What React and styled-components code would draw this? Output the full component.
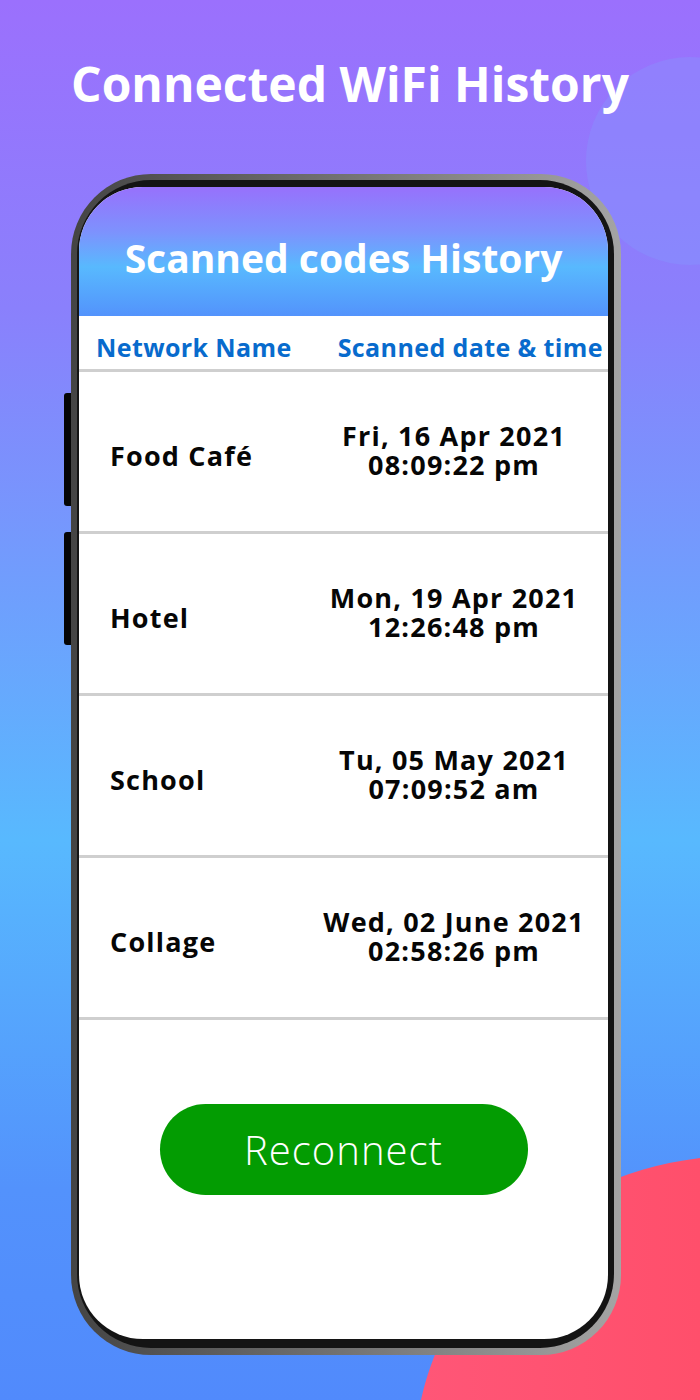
import React from "react";
import styled, { createGlobalStyle } from "styled-components";

const GlobalStyle = createGlobalStyle`
  html, body {
    margin: 0;
    padding: 0;
  }
  body {
    font-family: "Open Sans", "Liberation Sans", sans-serif;
  }
`;

const Page = styled.div`
  position: relative;
  width: 700px;
  height: 1400px;
  overflow: hidden;
  background: linear-gradient(180deg, #9b70fd 0%, #8a80fc 22%, #58b9fe 60%, #5392fc 85%, #518afc 100%);
`;

const Bubble = styled.div`
  position: absolute;
  left: 586px;
  top: 57px;
  width: 208px;
  height: 208px;
  border-radius: 50%;
  background: rgba(130, 160, 255, 0.28);
`;

const Blob = styled.svg`
  position: absolute;
  left: 0;
  top: 0;
`;

const Content = styled.div`
  position: relative;
  display: flex;
  flex-direction: column;
`;

const Heading = styled.h1`
  margin: 0;
  padding-top: 54px;
  height: 174px;
  box-sizing: border-box;
  text-align: center;
  color: #fff;
  font-size: 48px;
  font-weight: 700;
  line-height: 60px;
`;

const Frame = styled.div`
  position: relative;
  margin-left: 71px;
  width: 550px;
  box-sizing: border-box;
  padding: 6px 7px 7px 6px;
  border-radius: 80px;
  background: linear-gradient(90deg, #444 0%, #6e6e6e 45%, #a4a4a4 100%);
`;

const SideKey = styled.div`
  position: absolute;
  left: -7px;
  top: ${(p) => p.top}px;
  width: 7px;
  height: 113px;
  border-radius: 3px 0 0 3px;
  background: #050505;
`;

const Bezel = styled.div`
  padding: 7px 6px 9px 2px;
  border-radius: 74px;
  background: #141414;
`;

const Screen = styled.div`
  height: 1152px;
  border-radius: 64px;
  overflow: hidden;
  background: #fff;
  display: flex;
  flex-direction: column;
`;

const ScreenHeader = styled.div`
  height: 129px;
  flex-shrink: 0;
  display: flex;
  align-items: center;
  justify-content: center;
  padding-top: 12px;
  box-sizing: border-box;
  background: linear-gradient(180deg, #9771fc 0%, #7d92fd 35%, #58b9fe 62%, #5393fc 100%);
  color: #fff;
  font-size: 39px;
  font-weight: 700;
`;

const ColumnBar = styled.div`
  height: 56px;
  flex-shrink: 0;
  box-sizing: border-box;
  display: flex;
  justify-content: space-between;
  align-items: center;
  padding: 9px 5px 0 17px;
  border-bottom: 3px solid #cfcfcf;
  color: #086bcd;
  font-size: 25px;
  font-weight: 700;
  letter-spacing: 0.4px;
`;

const Row = styled.div`
  height: 162px;
  flex-shrink: 0;
  box-sizing: border-box;
  display: grid;
  grid-template-columns: 221px 1fr;
  align-items: center;
  border-bottom: 3px solid #cfcfcf;
  color: #060606;
  font-size: 27px;
  font-weight: 700;
  letter-spacing: 1.2px;
`;

const Name = styled.div`
  padding: 8px 0 0 31px;
`;

const Stamp = styled.div`
  display: flex;
  flex-direction: column;
  align-items: center;
  margin-top: -4px;
`;

const StampLine = styled.div`
  line-height: 29px;
  white-space: nowrap;
`;

const Footer = styled.div`
  padding-top: 84px;
  display: flex;
  justify-content: center;
`;

const Button = styled.button`
  width: 368px;
  height: 91px;
  border: none;
  border-radius: 46px;
  background: #039c02;
  color: #fff;
  font-family: "Open Sans", "Liberation Sans", sans-serif;
  font-size: 40px;
  font-weight: 300;
  letter-spacing: 1px;
  padding: 0;
  cursor: pointer;
`;

const rows = [
  { name: "Food Café", day: "Fri, 16 Apr 2021", time: "08:09:22 pm" },
  { name: "Hotel", day: "Mon, 19 Apr 2021", time: "12:26:48 pm" },
  { name: "School", day: "Tu, 05 May 2021", time: "07:09:52 am" },
  { name: "Collage", day: "Wed, 02 June 2021", time: "02:58:26 pm" },
];

export default function App() {
  return (
    <Page>
      <GlobalStyle />
      <Bubble />
      <Blob width="700" height="1400" viewBox="0 0 700 1400">
        <defs>
          <linearGradient id="pink" x1="0" x2="1" y1="0" y2="0">
            <stop offset="0" stopColor="#ff5677" />
            <stop offset="1" stopColor="#ff4f6b" />
          </linearGradient>
        </defs>
        <path d="M 421 1400 C 445 1290, 540 1178, 700 1158 L 700 1400 Z" fill="url(#pink)" />
      </Blob>
      <Content>
        <Heading>Connected WiFi History</Heading>
        <Frame>
          <SideKey top={219} />
          <SideKey top={358} />
          <Bezel>
            <Screen>
              <ScreenHeader>Scanned codes History</ScreenHeader>
              <ColumnBar>
                <span>Network Name</span>
                <span>Scanned date &amp; time</span>
              </ColumnBar>
              {rows.map((r) => (
                <Row key={r.name}>
                  <Name>{r.name}</Name>
                  <Stamp>
                    <StampLine>{r.day}</StampLine>
                    <StampLine>{r.time}</StampLine>
                  </Stamp>
                </Row>
              ))}
              <Footer>
                <Button>Reconnect</Button>
              </Footer>
            </Screen>
          </Bezel>
        </Frame>
      </Content>
    </Page>
  );
}
